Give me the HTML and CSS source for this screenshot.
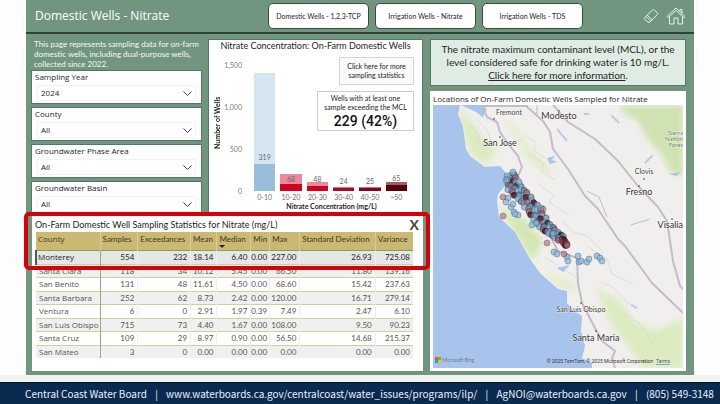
FILE: index.html
```html
<!DOCTYPE html>
<html lang="en">
<head>
<meta charset="utf-8">
<title>Domestic Wells - Nitrate</title>
<link rel="stylesheet" href="styles.css">
</head>
<body>
<div class="dashboard">
  <header class="topbar">
    <h1>Domestic Wells - Nitrate</h1>
    <nav class="tabs">
      <button type="button">Domestic Wells - 1,2,3-TCP</button>
      <button type="button">Irrigation Wells - Nitrate</button>
      <button type="button">Irrigation Wells - TDS</button>
    </nav>
    <div class="tools">
      <button type="button" aria-label="Clear filters"><svg width="16" height="16" viewBox="0 0 16 16"><path d="M1.5 10 9.5 1.8Q10.3 1 11.2 1.8L14.3 5Q15 5.800 14.300 6.600L7 14Q6 15 5 14L1.500 11.200Q1 10.600 1.500 10ZM4.300 7.200 9.200 11.900M3 8.600 7.700 13.200"/></svg></button>
      <button type="button" aria-label="Home"><svg width="20" height="18" viewBox="0 0 20 18"><path d="M1 9.500 10 1 19 9.500 17.800 10.700 10 3.500 2.200 10.700ZM3.500 9.800V17H8V11H12V17H16.500V9.800M14 4.500V2.500H16V6.500"/></svg></button>
    </div>
  </header>

  <main class="content">
    <div class="left">
      <section class="filters">
        <p>This page represents sampling data for on-farm domestic wells, including dual-purpose wells, collected since 2022.</p>
        <div class="filter"><label for="year">Sampling Year</label><select id="year"><option>2024</option></select></div>
        <div class="filter"><label for="county">County</label><select id="county"><option>All</option></select></div>
        <div class="filter"><label for="phase">Groundwater Phase Area</label><select id="phase"><option>All</option></select></div>
        <div class="filter"><label for="basin">Groundwater Basin</label><select id="basin"><option>All</option></select></div>
      </section>

      <section class="card chart">
        <h2>Nitrate Concentration: On-Farm Domestic Wells</h2>
        <div class="plot">
          <div class="ytitle">Number of Wells</div>
          <div class="yaxis"><span>1,500</span><span>1,000</span><span>500</span><span>0</span></div>
          <div class="bars">
            <div class="bar b0" style="height:118px"><i style="height:27px"></i><b>319</b></div>
            <div class="bar b1" style="height:17px"><i style="height:7px"></i><b>68</b></div>
            <div class="bar b1" style="height:9px"><i style="height:5px"></i><b>48</b></div>
            <div class="bar b2" style="height:4px"><i style="height:3px"></i><b>24</b></div>
            <div class="bar b3" style="height:4px"><i style="height:3px"></i><b>25</b></div>
            <div class="bar b4" style="height:9px"><i style="height:6px"></i><b>65</b></div>
          </div>
          <div class="xaxis"><span>0-10</span><span>10-20</span><span>20-30</span><span>30-40</span><span>40-50</span><span>&gt;50</span></div>
        </div>
        <div class="xtitle">Nitrate Concentration (mg/L)</div>
        <div class="callouts">
          <button type="button">Click here for more<br>sampling statistics</button>
          <div class="kpi"><span>Wells with at least one<br>sample exceeding the MCL</span><strong>229 (42%)</strong></div>
        </div>
      </section>

      <section class="stats">
        <div class="stats-head">
          <h2>On-Farm Domestic Well Sampling Statistics for Nitrate (mg/L)</h2>
          <button type="button" aria-label="Close">X</button>
        </div>
        <table>
          <colgroup><col class="c1"><col class="c2"><col class="c3"><col class="c4"><col class="c5"><col class="c6"><col class="c7"><col class="c8"><col class="c9"></colgroup>
          <thead><tr><th>County</th><th>Samples</th><th>Exceedances</th><th>Mean</th><th class="sorted">Median</th><th>Min</th><th>Max</th><th>Standard Deviation</th><th>Variance</th></tr></thead>
          <tbody>
            <tr class="selected"><td>Monterey</td><td>554</td><td>232</td><td>18.14</td><td>6.40</td><td>0.00</td><td>227.00</td><td>26.93</td><td>725.08</td></tr>
            <tr><td>Santa Clara</td><td>118</td><td>34</td><td>10.12</td><td>5.45</td><td>0.00</td><td>66.50</td><td>11.80</td><td>139.16</td></tr>
            <tr><td>San Benito</td><td>131</td><td>48</td><td>11.61</td><td>4.50</td><td>0.00</td><td>68.60</td><td>15.42</td><td>237.63</td></tr>
            <tr><td>Santa Barbara</td><td>252</td><td>62</td><td>8.73</td><td>2.42</td><td>0.00</td><td>120.00</td><td>16.71</td><td>279.14</td></tr>
            <tr><td>Ventura</td><td>6</td><td>0</td><td>2.91</td><td>1.97</td><td>0.39</td><td>7.49</td><td>2.47</td><td>6.10</td></tr>
            <tr><td>San Luis Obispo</td><td>715</td><td>73</td><td>4.40</td><td>1.67</td><td>0.00</td><td>108.00</td><td>9.50</td><td>90.23</td></tr>
            <tr><td>Santa Cruz</td><td>109</td><td>29</td><td>8.97</td><td>0.90</td><td>0.00</td><td>56.50</td><td>14.68</td><td>215.37</td></tr>
            <tr><td>San Mateo</td><td>3</td><td>0</td><td>0.00</td><td>0.00</td><td>0.00</td><td>0.00</td><td>0.00</td><td>0.00</td></tr>
          </tbody>
        </table>
        <div class="highlight"></div>
      </section>
    </div>

    <div class="right">
      <p class="mcl">The nitrate maximum contaminant level (MCL), or the level considered safe for drinking water is 10 mg/L.<br><a href="#">Click here for more information</a>.</p>
      <section class="card mapcard">
        <h2>Locations of On-Farm Domestic Wells Sampled for Nitrate</h2>
        <svg class="map" viewBox="0 0 250 263" preserveAspectRatio="xMidYMid slice">
          <defs>
            <filter id="soft" x="-20%" y="-20%" width="140%" height="140%"><feGaussianBlur stdDeviation="3"/></filter>
            <clipPath id="landclip"><path d="M27 0 25 9 30 22 33 44 37 51 52 62 67 61 74 69 72 81 65 89 64 96 66 112 82 127 97 154 107 168 125 184 134 186V198L139 204 149 211 148 226 152 241 149 253 159 258V263H250V0Z"/></clipPath>
          </defs>
          <rect width="250" height="263" fill="#a9c4ec"/>
          <g clip-path="url(#landclip)">
            <rect width="250" height="263" fill="#f1efed"/>
            <g filter="url(#soft)">
              <path fill="#cfe3b0" d="M188 0H250V72L236 66 229 50 215 35 205 16 190 8Z"/>
              <path fill="#d3e8b4" d="M64 98 76 108 95 116 110 136 104 150 98 154 78 122Z"/>
              <path fill="#dcebc0" d="M24 0 36 14 52 36 64 45 55 59 37 50 30 25ZM162 182 188 196 200 216 224 226 250 212V263H210L195 240 178 219Z"/>
              <path fill="#e3edcc" d="M97 154 112 166 140 178 155 194 143 186 126 182ZM70 12 80 20 102 48 116 60 120 78 112 68 94 54Z"/>
            </g>
            <g fill="none" stroke="#dcd8d0" stroke-width="1" opacity=".8">
              <path d="M38 20 46 30 44 37 55 41M43 14 54 25 60 41M92 30 103 38 101 46 113 53M96 48 111 59 108 66 122 75M104 78 121 91 116 97 136 110M130 117 142 128 153 130 170 147M112 152 128 163 145 173M155 142 174 154 179 169 200 179M168 177 181 183 197 200M187 207 206 218 221 240M202 12 216 24 226 22 237 41M220 7 240 25M85 119 95 130 110 134"/>
            </g>
            <path d="M28 0 43 7 52 14 58 21 50 12 54 4 49 0ZM114 53 122 51 119 55 124 57 117 59ZM124 163 137 160 130 167ZM236 69 248 67 243 71Z" fill="#a9c4ec"/>
            <path d="M212 58 220 50M198 200 204 203M178 10 186 18M151 9H156M124 24 134 36" fill="none" stroke="#bfcbe2" stroke-width="2"/>
            <g fill="none" stroke="#c6bacb" stroke-width="2" stroke-linejoin="round">
              <path d="M49 0 54 12 64 17 67 27 75 39 85 51 89 62 85 71 101 101 125 146 144 153 145 178 149 198 162 223 169 236 182 246 179 253 182 263M50 1H95"/>
              <path d="M92 0 110 16 117 27 120 44 135 64 152 91 165 104 185 134 192 141 219 178 250 208"/>
              <path d="M120 0 135 17 162 34 185 56 205 81 225 102 234 116 237 136 240 156 247 181 250 184M198 32"/>
              <path d="M104 0V12M198 120 217 114M154 86 166 92 174 112" stroke-width="1"/>
            </g>
          </g>
          <g id="wells" stroke-width=".7"></g>
          <g fill="#333"><circle cx="61" cy="14" r=".8"/><circle cx="67" cy="32" r=".8"/><circle cx="126" cy="6" r=".8"/><circle cx="211" cy="74" r=".8"/><circle cx="206" cy="81" r=".8"/><circle cx="239" cy="114" r=".8"/><circle cx="148" cy="198" r=".8"/><circle cx="163" cy="226" r=".8"/></g>
          <g class="places">
            <text x="76" y="10">Fremont</text>
            <text x="126" y="14" class="city">Modesto</text>
            <text x="67" y="41" class="city">San Jose</text>
            <text x="211" y="69">Clovis</text>
            <text x="206" y="90" class="city">Fresno</text>
            <text x="250" y="123" class="city edge">Visalia</text>
            <text x="148" y="207">San Luis Obispo</text>
            <text x="163" y="236" class="city">Santa Maria</text>
            <g class="park"><text x="250" y="30">Sierra</text><text x="250" y="36">Nation</text><text x="250" y="42">Fores</text></g>
          </g>
          <path fill="#e8562b" d="M2 252h3v3H2z"/><path fill="#7fb62d" d="M5 252h3v3H5z"/><path fill="#28a0da" d="M2 255h3v3H2z"/><path fill="#f4b92a" d="M5 255h3v3H5z"/>
          <text x="9" y="257" class="bing">Microsoft Bing</text>
          <text x="220" y="258" class="credit">© 2025 TomTom, © 2025 Microsoft Corporation</text>
          <a href="#"><text x="237" y="258" class="credit terms">Terms</text></a>
        </svg>
      </section>
    </div>
  </main>
</div>
<footer>
  <span>Central Coast Water Board</span><span>|</span><span>www.waterboards.ca.gov/centralcoast/water_issues/programs/ilp/</span><span>|</span><span>AgNOI@waterboards.ca.gov</span><span>|</span><span>(805) 549-3148</span>
</footer>
<script src="map.js"></script>
</body>
</html>
```
FILE: styles.css
```css
* { box-sizing: border-box; }
body {
  margin: 0;
  min-height: 100vh;
  display: flex;
  flex-direction: column;
  background: #f1f3f3;
  color: #252423;
  font: 9px/10px Lato, "Noto Sans", sans-serif;
}
h1, h2, p { margin: 0; font-size: inherit; font-weight: 400; }
h2 { white-space: nowrap; }
button { font: inherit; color: inherit; padding: 0; cursor: pointer; }
.dashboard {
  flex: 1;
  display: flex;
  flex-direction: column;
  margin: 0 0 7px;
  padding: 0 26px;
  background: linear-gradient(90deg, #fdfdfd 26px, #72957f 26px, #72957f calc(100% - 26px), #fdfdfd calc(100% - 26px));
}
.topbar {
  display: flex;
  align-items: center;
  height: 34px;
  padding: 0 8px 0 9px;
  border-bottom: 2px solid #2c4335;
}
h1 { flex: 0 0 233px; font: 12px/16px "Open Sans", sans-serif; color: #fff; }
.tabs { display: flex; gap: 6px; }
.tabs button {
  width: 101px;
  height: 26px;
  background: #fff;
  border: 1px solid #3c4b42;
  border-radius: 5px;
  font-size: 7px;
}
.tools { display: flex; align-items: center; gap: 7px; margin-left: auto; }
.tools button { display: flex; border: 0; background: none; }
.tools svg { fill: none; stroke: #e4f3e7; stroke-width: 1; }

.content {
  flex: 1;
  display: grid;
  grid-template-columns: 392fr 256fr;
  gap: 7px;
  padding: 5px 8px 4px 5px;
}
.left {
  display: grid;
  grid-template-columns: 171fr 215fr;
  grid-template-rows: 174px 1fr;
  column-gap: 6px;
}
.card { background: #fff; border: 1px solid #587665; }
.filters { display: flex; flex-direction: column; gap: 3px; }
.filters p { padding: 0 3px; color: #f4faf5; height: 28px; font-size: 8px; }
.filter {
  height: 34px;
  padding: 0 3px 1px;
  background: #fff;
  border: 1px solid #587665;
  display: flex;
  flex-direction: column;
  font-family: "Open Sans", sans-serif;
  font-size: 8px;
}
.filter label { line-height: 12px; }
.filter select {
  appearance: none;
  height: 17px;
  margin: 2px 2px 1px;
  padding: 0 3px;
  border: 1px solid #f3f3f3;
  font: inherit;
  color: inherit;
  background: url("data:image/svg+xml,%3Csvg xmlns='http://www.w3.org/2000/svg' width='9' height='5' fill='none' stroke='%23444'%3E%3Cpath d='M.5.5l4 4 4-4'/%3E%3C/svg%3E") no-repeat right 3px center;
}

.chart { position: relative; padding: 0 3px; }
.chart h2 { text-align: center; line-height: 12px; }
.plot {
  display: grid;
  grid-template-columns: 10px 16px 1fr;
  grid-template-rows: 136px 11px;
  column-gap: 4px;
  margin-top: 3px;
}
.ytitle { writing-mode: vertical-rl; transform: rotate(180deg); text-align: center; justify-self: center; font-weight: 700; font-size: 7px; }
.yaxis { display: flex; flex-direction: column; justify-content: space-between; align-items: flex-end; font-size: 7px; color: #7a7a7a; margin-bottom: -5px; padding-top: 5px; }
.bars, .xaxis { display: grid; grid-template-columns: repeat(6, 1fr); column-gap: 5px; align-items: end; padding: 0 12px 0 8px; }
.xaxis { grid-column: 3; text-align: center; font-size: 7px; color: #707070; }
.xaxis span { margin: 0 -3px; }
.bar { position: relative; display: flex; align-items: flex-end; }
.bar i { width: 100%; }
.bar b { position: absolute; left: 0; right: 0; bottom: 5px; text-align: center; font-weight: 400; font-size: 7px; color: #666; }
.b0 { background: #d5e6f2; } .b0 i { background: #9bbddc; } .b0 b { bottom: 29px; }
.b1 { background: #e98a9e; } .b1 i { background: #d2001f; } .b1 b { bottom: 7px; }
.b2 { background: #dc7185; } .b2 i { background: #a90a25; }
.b3 { background: #cb7080; } .b3 i { background: #86061a; }
.b4 { background: #a45c6b; } .b4 i { background: #560009; } .b4 b { bottom: 8px; }
.xtitle { text-align: center; font-weight: 700; font-size: 7px; line-height: 8px; padding-left: 32px; }
.callouts { position: absolute; top: 17px; right: 8px; display: flex; flex-direction: column; align-items: flex-end; gap: 6px; text-align: center; font-size: 7px; white-space: nowrap; }
.callouts button { width: 75px; height: 28px; background: #fafafa; border: 1px solid #d4d4d4; line-height: 9px; }
.kpi { width: 97px; height: 40px; background: #fff; border: 1px solid #ccc; line-height: 9px; padding-top: 2px; }
.kpi strong { display: block; font: 500 14px/19px Roboto, sans-serif; color: #111; }

.stats { position: relative; grid-column: 1 / 3; background: #fff; padding: 4px 10px 0 3px; margin-left: 1px; }
.stats-head { display: flex; justify-content: space-between; align-items: center; height: 15px; }
.stats-head button { border: 0; background: none; font-size: 14px; line-height: 14px; color: #444; margin-right: -6px; font-weight: 700; }
table { width: 100%; table-layout: fixed; border-collapse: collapse; color: #555; }
.c1 { width: 17%; } .c2 { width: 10%; } .c3 { width: 14%; } .c4 { width: 7%; } .c5 { width: 9%; }
.c6 { width: 5%; } .c7 { width: 8%; } .c8 { width: 20%; } .c9 { width: 10%; }
th { height: 18px; padding: 0 2px 3px; background: #cbb873; color: #3c3826; font-size: 8px; font-weight: 400; text-align: left; white-space: nowrap; border-right: 1px solid #dccb8f; }
td { padding: 0 3px 0 0; text-align: right; font-size: 8px; line-height: 10px; white-space: nowrap; border-right: 1px solid #eee; }
td:first-child { text-align: left; padding-left: 3px; border-right-color: #86b66c; }
th:first-child, td:first-child { font-family: "Open Sans", sans-serif; }
td:last-child, th:last-child { border-right: 0; }
tbody tr { height: 14px; border-bottom: 1px solid #cbd29b; }
tbody tr:nth-child(even) { height: 13px; background: #f0f0f0; }
tbody tr:last-child { border-bottom: 0; }
tbody tr.selected { color: #222; background: #e6e6e6; border-top: 1px solid #76a84f; }
.selected td:first-child { border-left: 2px solid #555; padding-left: 1px; }
.sorted { position: relative; }
.sorted::after { content: ""; position: absolute; left: 2px; bottom: 2px; border: 3px solid transparent; border-top-color: #222; border-bottom: 0; }
.highlight { position: absolute; top: -1px; left: -8px; right: -7px; height: 58px; border: 4px solid #d60007; border-radius: 5px; pointer-events: none; }

.right { display: flex; flex-direction: column; gap: 5px; }
.mcl { height: 47px; padding: 3px 8px; background: #dfece3; border: 1px solid #587665; text-align: center; font-size: 10px; line-height: 13px; }
.mcl a { color: inherit; }
.mapcard { flex: 1; display: flex; flex-direction: column; padding: 0 2px 2px; border-color: #fff; }
.mapcard h2 { font: 8px/13px "Open Sans", sans-serif; }
.map { width: 100%; flex: 1; min-height: 0; display: block; }
.places text { font-size: 7px; text-anchor: middle; fill: #444; stroke: #fff; stroke-width: 1px; stroke-opacity: .6; paint-order: stroke; }
.places .city { font-size: 9px; fill: #333; }
.places .edge { text-anchor: end; }
.places .park text { font-size: 6px; text-anchor: end; fill: #6b8069; }
.bing { font-size: 5px; fill: #6d7b93; }
.credit { font-family: Roboto, sans-serif; font-size: 5px; fill: #333; text-anchor: end; }
.terms { fill: #3d5d96; text-decoration: underline; }

footer {
  display: flex;
  align-items: center;
  justify-content: space-between;
  height: 23px;
  padding: 0 6px 0 25px;
  background: #0b2a50;
  border-top: 1px solid #061529;
  color: #e9f1fa;
  font: 10px/16px "Noto Sans CJK SC", sans-serif;
  white-space: nowrap;
}
```
FILE: map.js
```js
const group = document.getElementById("wells");
const palette = [["#8fb6d8", "#486b88"], ["#7f9fbc", "#33485c"], ["#a96a76", "#5a1f2c"], ["#6f8fab", "#26384a"], ["#3e2029", "#1b0d12"]];

function well(x, y, kind, alpha) {
  const dot = document.createElementNS("http://www.w3.org/2000/svg", "circle");
  dot.setAttribute("cx", x);
  dot.setAttribute("cy", y);
  dot.setAttribute("r", 3);
  dot.setAttribute("fill", palette[kind][0]);
  dot.setAttribute("stroke", palette[kind][1]);
  dot.setAttribute("opacity", alpha);
  group.appendChild(dot);
}

// Wells along the Salinas Valley floor.
const valley = [[78, 70], [79, 81], [90, 91], [101, 105], [110, 119], [119, 127], [129, 134], [134, 141]];
const spread = [4, 5, 5, 5, 4, 3, 1, 1];
valley.slice(1).forEach(([x1, y1], s) => {
  const [x0, y0] = valley[s];
  for (let i = 0; i < 14; i++) {
    const t = i / 14;
    const k = s * 14 + i;
    const off = Math.sin(k * 2.4) * spread[s];
    const kind = s > 5 ? (k % 3 ? 2 : 4) : [0, 1, 3, 0, 2, 1, 4][(k * 3) % 7];
    well(x0 + (x1 - x0) * t + off, y0 + (y1 - y0) * t - off * 0.6, kind, 0.85);
  }
});

// Outlying wells.
[[74, 71], [73, 75], [80, 67], [86, 77], [75, 93], [73, 97], [78, 102], [80, 99], [81, 107], [85, 110], [82, 109],
 [99, 120], [103, 118], [108, 103], [120, 128], [121, 147], [124, 149], [134, 152], [135, 156], [145, 151],
 [146, 157], [148, 156], [154, 157], [156, 154], [164, 151], [167, 153], [169, 156]].forEach(([x, y]) => well(x, y, 0, 0.75));
[[70, 92], [70, 111], [114, 138], [131, 149], [110, 104]].forEach(([x, y]) => well(x, y, 2, 0.6));
```
